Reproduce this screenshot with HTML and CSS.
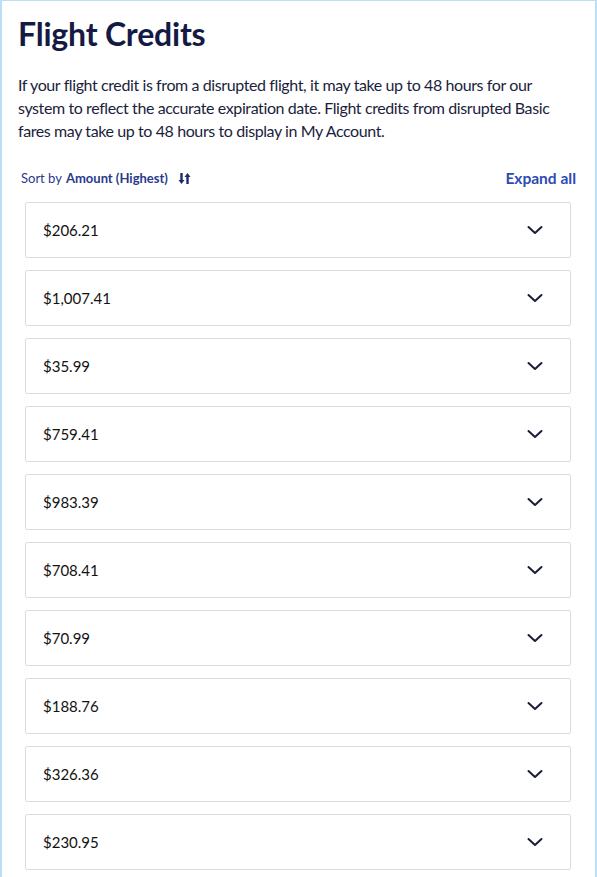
FILE: index.html
```html
<!DOCTYPE html>
<html lang="en">
<head>
<meta charset="utf-8">
<title>Flight Credits</title>
<link rel="stylesheet" href="styles.css">
</head>
<body>
<div class="frame">
  <main class="page">
    <h1 class="title">Flight Credits</h1>
    <p class="intro">If your flight credit is from a disrupted flight, it may take up to 48 hours for our system to reflect the accurate expiration date. Flight credits from disrupted Basic fares may take up to 48 hours to display in My Account.</p>
    <div class="toolbar">
      <div class="sort">Sort by <strong>Amount (Highest)</strong>
        <svg class="sort-icon" width="13" height="13" viewBox="0 0 13 13" aria-hidden="true">
          <path d="M3.5 1v9" stroke="#1d2a6b" stroke-width="2.4" fill="none"/>
          <path d="M0.5 8h6l-3 4z" fill="#1d2a6b"/>
          <path d="M9.5 12V3" stroke="#1d2a6b" stroke-width="2.4" fill="none"/>
          <path d="M6.5 5h6l-3-4z" fill="#1d2a6b"/>
        </svg>
      </div>
      <a class="expand" href="#">Expand all</a>
    </div>
    <ul class="credits">
      <li class="credit"><span>$206.21</span><svg class="chev" width="16" height="10" viewBox="0 0 16 10"><path d="M1.5 2l6.5 6 6.5-6" /></svg></li>
      <li class="credit"><span>$1,007.41</span><svg class="chev" width="16" height="10" viewBox="0 0 16 10"><path d="M1.5 2l6.5 6 6.5-6" /></svg></li>
      <li class="credit"><span>$35.99</span><svg class="chev" width="16" height="10" viewBox="0 0 16 10"><path d="M1.5 2l6.5 6 6.5-6" /></svg></li>
      <li class="credit"><span>$759.41</span><svg class="chev" width="16" height="10" viewBox="0 0 16 10"><path d="M1.5 2l6.5 6 6.5-6" /></svg></li>
      <li class="credit"><span>$983.39</span><svg class="chev" width="16" height="10" viewBox="0 0 16 10"><path d="M1.5 2l6.5 6 6.5-6" /></svg></li>
      <li class="credit"><span>$708.41</span><svg class="chev" width="16" height="10" viewBox="0 0 16 10"><path d="M1.5 2l6.5 6 6.5-6" /></svg></li>
      <li class="credit"><span>$70.99</span><svg class="chev" width="16" height="10" viewBox="0 0 16 10"><path d="M1.5 2l6.5 6 6.5-6" /></svg></li>
      <li class="credit"><span>$188.76</span><svg class="chev" width="16" height="10" viewBox="0 0 16 10"><path d="M1.5 2l6.5 6 6.5-6" /></svg></li>
      <li class="credit"><span>$326.36</span><svg class="chev" width="16" height="10" viewBox="0 0 16 10"><path d="M1.5 2l6.5 6 6.5-6" /></svg></li>
      <li class="credit"><span>$230.95</span><svg class="chev" width="16" height="10" viewBox="0 0 16 10"><path d="M1.5 2l6.5 6 6.5-6" /></svg></li>
    </ul>
  </main>
</div>
</body>
</html>
```
FILE: styles.css
```css
html, body {
  margin: 0;
  padding: 0;
  background: #ffffff;
}
body {
  font-family: Lato, "Open Sans", "Liberation Sans", sans-serif;
  color: #1b1e3c;
}
.frame {
  box-sizing: border-box;
  width: 597px;
  min-height: 877px;
  border-top: 1px solid #b8e0f7;
  border-left: 2px solid #b8e0f7;
  border-right: 2px solid #b8e0f7;
}
.page {
  padding: 14px 19px 0 16px;
}
.title {
  margin: 0;
  font-size: 32px;
  line-height: 38px;
  font-weight: 700;
  color: #141a44;
  letter-spacing: -0.2px;
}
.intro {
  margin: 20px 0 0 0;
  font-size: 16px;
  line-height: 23px;
  color: #1b1e3c;
  letter-spacing: -0.4px;
}
.toolbar {
  display: flex;
  justify-content: space-between;
  align-items: center;
  margin-top: 24px;
  height: 24px;
}
.sort {
  display: flex;
  align-items: center;
  padding-left: 3px;
  font-size: 13px;
  color: #2a3a8c;
}
.sort strong {
  font-weight: 700;
  margin-left: 4px;
  color: #2a3a8c;
}
.sort-icon {
  margin-left: 10px;
}
.expand {
  font-size: 15.5px;
  font-weight: 700;
  color: #2d4bb3;
  text-decoration: none;
}
.credits {
  list-style: none;
  margin: 12px 5px 0 7px;
  padding: 0;
  display: flex;
  flex-direction: column;
  gap: 12px;
}
.credit {
  box-sizing: border-box;
  height: 56px;
  border: 1px solid #dcdcdc;
  border-radius: 2px;
  display: flex;
  align-items: center;
  justify-content: space-between;
  padding: 0 27px 0 17px;
  font-size: 15px;
  color: #121212;
}
.chev path {
  fill: none;
  stroke: #1a1d3a;
  stroke-width: 2;
  stroke-linecap: round;
  stroke-linejoin: round;
}
```
